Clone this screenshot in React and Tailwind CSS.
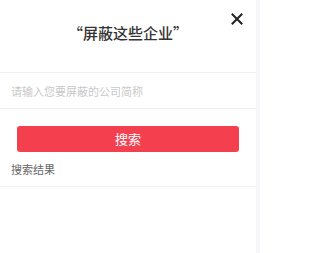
import React, { useState } from "react"

export default function App() {
    const [keyword, setKeyword] = useState("")

    return (
        <div
            className="flex h-[253px] w-[260px] bg-[#f7f7f9]"
            style={{ fontFamily: '"Noto Sans CJK SC", "Noto Sans", sans-serif' }}
        >
            <div className="flex w-[256px] flex-col bg-white">
                <div className="relative flex h-[72px] items-start justify-center pt-[23px]">
                    <h1 className="text-[15px] font-medium leading-[20px] text-[#333]">
                        “屏蔽这些企业”
                    </h1>
                    <button className="absolute right-[13px] top-[13px] flex h-[12px] w-[12px] items-center justify-center text-[#222]">
                        <svg viewBox="0 0 12 12" className="h-[12px] w-[12px]">
                            <path
                                d="M1.5 1.5 L10.5 10.5 M10.5 1.5 L1.5 10.5"
                                stroke="currentColor"
                                strokeWidth="2"
                                strokeLinecap="square"
                            />
                        </svg>
                    </button>
                </div>

                <div className="border-y border-[#f0f0f0]">
                    <input
                        className="h-[35px] w-full px-[11px] text-[11px] text-[#333] outline-none placeholder:text-[#c8c8c8]"
                        placeholder="请输入您要屏蔽的公司简称"
                        value={keyword}
                        onChange={e => setKeyword(e.target.value)}
                    />
                </div>

                <div className="px-[17px] pt-[16px]">
                    <button className="h-[26px] w-full rounded-[3px] bg-[#f43f4f] text-[13px] text-white">
                        搜索
                    </button>
                </div>

                <div className="flex h-[35px] items-center border-b border-[#f3f3f3] px-[11px] text-[11px] text-[#666]">
                    搜索结果
                </div>
            </div>
        </div>
    )
}
